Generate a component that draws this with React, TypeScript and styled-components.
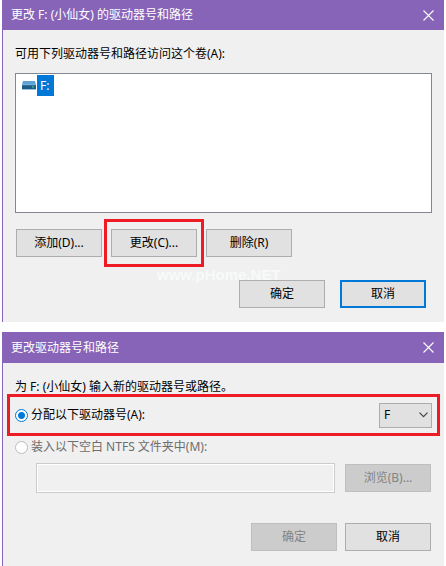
import React, { useState } from "react";
import styled, { createGlobalStyle, css } from "styled-components";

const GlobalStyle = createGlobalStyle`
  *, *::before, *::after { box-sizing: border-box; }
  body {
    margin: 0;
    background: #fff;
    color: #000;
    font: 12px/16px "Noto Sans", "Noto Sans CJK SC", sans-serif;
  }
  button, input, select { font: inherit; color: inherit; margin: 0; }
`;

const Page = styled.main`
  display: flex;
  flex-direction: column;
  gap: 10px;
  min-height: 100vh;
  padding: 0 2px;
`;

const Dialog = styled.section`
  background: #f0f0f0;
  border-left: 1px solid #8764b8;
  &:last-child { flex: 1; }
`;

const TitleBar = styled.header<{ $tall?: boolean }>`
  display: flex;
  align-items: center;
  justify-content: space-between;
  height: ${(p) => (p.$tall ? 31 : 30)}px;
  padding: 0 10px 0 8px;
  background: #8764b8;
  color: #fff;
`;

const Title = styled.h1`
  margin: 0;
  font-size: 12px;
  font-weight: 400;
`;

const CloseButton = styled.button`
  display: flex;
  padding: 0;
  border: 0;
  background: none;
  color: #fff;
`;

const Body = styled.div`
  padding: 16px 12px 14px;
`;

const Message = styled.p`
  margin: 0;
`;

const VolumeList = styled.ul`
  height: 140px;
  margin: 11px 0 0;
  padding: 1px 6px;
  border: 1px solid #828790;
  background: #fff;
  list-style: none;
`;

const VolumeItem = styled.li`
  display: flex;
  align-items: center;
  gap: 1px;
`;

const VolumeName = styled.span`
  padding: 3px 5px 2px 3px;
  background: #0078d7;
  color: #fff;
`;

const PushButton = styled.button<{ $focused?: boolean }>`
  flex: none;
  width: 86px;
  height: 28px;
  padding: 0;
  border: ${(p) => (p.$focused ? "2px solid #0078d7" : "1px solid #adadad")};
  background: #e1e1e1;
  &:disabled {
    border-color: #bfbfbf;
    background: #ccc;
    color: #838383;
  }
`;

const frame = css`
  border: 3px solid #ed1c24;
`;

const VolumeActions = styled.div`
  display: flex;
  align-items: center;
  gap: 2px;
  margin: 6px 1px 0;
`;

const ButtonFrame = styled.div`
  ${frame}
  padding: 7px 4px;
`;

const Footer = styled.footer<{ $gap: number; $top: number; $right: number }>`
  display: flex;
  justify-content: flex-end;
  gap: ${(p) => p.$gap}px;
  padding: ${(p) => p.$top}px ${(p) => p.$right}px 0 0;
`;

const WatermarkRow = styled.div`
  height: 13px;
  padding-left: 142px;
  color: #f8fafa;
  font: 700 15px/16px "Liberation Sans", sans-serif;
`;

const DriveRow = styled.div`
  ${frame}
  display: flex;
  align-items: center;
  justify-content: space-between;
  height: 42px;
  margin: -1px -8px 0;
  padding: 0 5px;
`;

const RadioLabel = styled.label<{ $muted?: boolean }>`
  display: flex;
  align-items: center;
  gap: 3px;
  color: ${(p) => (p.$muted ? "#6d6d6d" : "#000")};
`;

const Radio = styled.input`
  appearance: none;
  width: 13px;
  height: 13px;
  border: 1px solid #bcbcbc;
  border-radius: 50%;
  background: #fff;
  &:checked {
    border-color: #0078d7;
    background: radial-gradient(circle, #0078d7 3px, #fff 4px);
  }
`;

const SelectBox = styled.div`
  display: grid;
  align-items: center;
  width: 53px;
  height: 25px;
  & > * { grid-area: 1 / 1; }
  & > svg { justify-self: end; margin-right: 4px; pointer-events: none; }
`;

const DriveSelect = styled.select`
  appearance: none;
  width: 100%;
  height: 100%;
  padding: 0 16px 0 4px;
  border: 1px solid #adadad;
  border-radius: 0;
  background: #e1e1e1;
`;

const MountOption = styled.div`
  margin-top: 3px;
`;

const PathRow = styled.div`
  display: flex;
  align-items: center;
  gap: 10px;
  margin: 8px 1px 0 21px;
`;

const PathInput = styled.input`
  flex: 1;
  min-width: 0;
  height: 30px;
  padding: 0 6px;
  border: 1px solid #ccc;
  box-shadow: inset 0 0 0 1px #fff;
  background: #f0f0f0;
`;

const CloseIcon = () => (
  <svg width="11" height="11" viewBox="0 0 11 11" stroke="currentColor" strokeWidth="1.1" aria-hidden="true">
    <path d="M.5 .5l10 10M10.500 .5l-10 10" />
  </svg>
);

const DriveIcon = () => (
  <svg width="14" height="9" viewBox="0 0 14 9" aria-hidden="true">
    <path d="M1 0h12l1 4H0z" fill="#5da2d5" />
    <path d="M0 4h14v4H0z" fill="#1f5b87" />
    <path d="M0 3.500h14v.7H0z" fill="#8cc2e6" />
    <path d="M0 8h14v.7H0z" fill="#6faad2" />
    <path d="M10 5.500h2v1h-2z" fill="#3be07a" />
  </svg>
);

const ChevronIcon = () => (
  <svg width="9" height="6" viewBox="0 0 9 6" fill="none" stroke="#444" strokeWidth="1.2" aria-hidden="true">
    <path d="M.5 .7l4 4 4-4" />
  </svg>
);

function TitleHeader({ id, text, tall }: { id: string; text: string; tall?: boolean }) {
  return (
    <TitleBar $tall={tall}>
      <Title id={id}>{text}</Title>
      <CloseButton type="button" aria-label="关闭">
        <CloseIcon />
      </CloseButton>
    </TitleBar>
  );
}

export default function App() {
  const [letter, setLetter] = useState("F");
  return (
    <>
      <GlobalStyle />
      <Page>
        <Dialog role="dialog" aria-labelledby="volume-title">
          <TitleHeader id="volume-title" text="更改 F: (小仙女) 的驱动器号和路径" />
          <Body>
            <Message id="volume-list">可用下列驱动器号和路径访问这个卷(A):</Message>
            <VolumeList aria-labelledby="volume-list">
              <VolumeItem>
                <DriveIcon />
                <VolumeName>F:</VolumeName>
              </VolumeItem>
            </VolumeList>
            <VolumeActions>
              <PushButton type="button">添加(D)...</PushButton>
              <ButtonFrame>
                <PushButton type="button">更改(C)...</PushButton>
              </ButtonFrame>
              <PushButton type="button">删除(R)</PushButton>
            </VolumeActions>
            <WatermarkRow>www.pHome.NET</WatermarkRow>
            <Footer $gap={15} $top={0} $right={6}>
              <PushButton type="button">确定</PushButton>
              <PushButton type="button" $focused>取消</PushButton>
            </Footer>
          </Body>
        </Dialog>

        <Dialog role="dialog" aria-labelledby="path-title">
          <TitleHeader id="path-title" text="更改驱动器号和路径" tall />
          <Body>
            <Message>为 F: (小仙女) 输入新的驱动器号或路径。</Message>
            <DriveRow>
              <RadioLabel>
                <Radio type="radio" name="target" defaultChecked />
                分配以下驱动器号(A):
              </RadioLabel>
              <SelectBox>
                <DriveSelect aria-label="驱动器号" value={letter} onChange={(e) => setLetter(e.target.value)}>
                  <option>F</option>
                </DriveSelect>
                <ChevronIcon />
              </SelectBox>
            </DriveRow>
            <MountOption>
              <RadioLabel $muted>
                <Radio type="radio" name="target" disabled />
                装入以下空白 NTFS 文件夹中(M):
              </RadioLabel>
            </MountOption>
            <PathRow>
              <PathInput type="text" aria-label="文件夹路径" disabled />
              <PushButton type="button" disabled>浏览(B)...</PushButton>
            </PathRow>
            <Footer $gap={8} $top={30} $right={1}>
              <PushButton type="button" disabled>确定</PushButton>
              <PushButton type="button">取消</PushButton>
            </Footer>
          </Body>
        </Dialog>
      </Page>
    </>
  );
}
